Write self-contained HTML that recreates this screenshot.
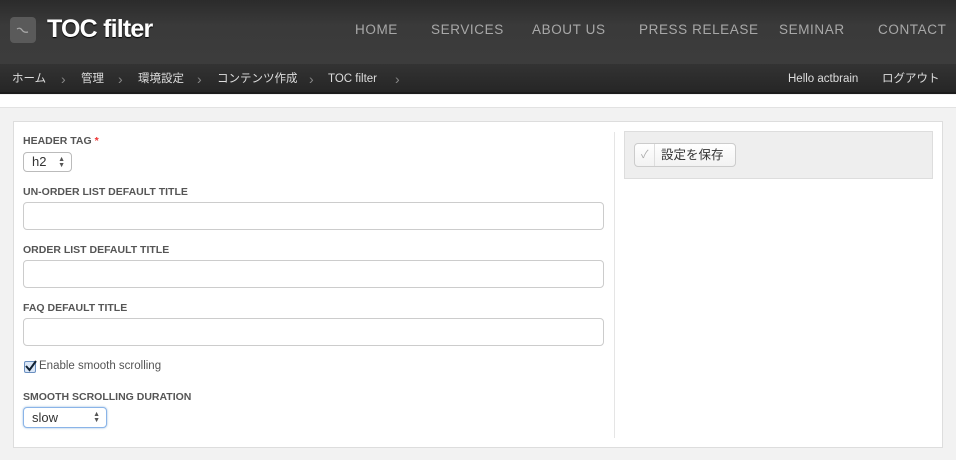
<!DOCTYPE html>
<html><head><meta charset="utf-8"><style>
*{box-sizing:border-box;margin:0;padding:0}
body{width:956px;height:460px;overflow:hidden;background:#f2f2f2;font-family:"Liberation Sans","Noto Sans CJK JP",sans-serif;position:relative}
.top{position:absolute;left:0;top:0;width:956px;height:64px;background:linear-gradient(#2b2b2b,#3a3a3a 40%,#3c3c3c)}
.logo{position:absolute;left:10px;top:17px;width:26px;height:26px;border-radius:4px;background:#5a5a5a}
.title{position:absolute;left:47px;top:15px;color:#fff;font-size:25px;font-weight:bold;letter-spacing:-0.8px;text-shadow:0 1px 1px #000}
.nav{position:absolute;top:22px;color:#a8a8a8;font-size:13.5px;letter-spacing:0.6px;line-height:16px}
.bc{position:absolute;left:0;top:64px;width:956px;height:30px;background:linear-gradient(#333,#262626);border-bottom:2px solid #1c1c1c}
.bc span{position:absolute;top:7px;height:16px;line-height:16px;color:#ddd;font-size:11.5px}
.bc .a{color:#888;font-size:14px}
.strip{position:absolute;left:0;top:95px;width:956px;height:13px;background:#fff;border-bottom:1px solid #e2e2e2}
.panel{position:absolute;left:13px;top:121px;width:930px;height:327px;background:#fff;border:1px solid #ddd}
.lbl{position:absolute;left:23px;font-size:10.5px;font-weight:bold;color:#555}
.inp{position:absolute;left:23px;width:581px;height:28px;border:1px solid #ccc;border-radius:4px;background:#fff}
.sel{position:absolute;left:23px;border:1px solid #bbb;border-radius:4px;font-size:13px;color:#333;padding-left:8px;background:#fff}
.arr{position:absolute;right:6px;top:4px;font-size:7px;line-height:6px;color:#555}
.side{position:absolute;left:624px;top:131px;width:309px;height:48px;background:#eee;border:1px solid #ddd}
.btn{position:absolute;left:634px;top:143px;width:102px;height:24px;border:1px solid #ccc;border-radius:4px;background:linear-gradient(#fff,#f2f2f2);font-size:12.5px;color:#333}
.btn span{position:absolute;top:3px;line-height:16px;height:16px}
</style></head><body>
<div class="top">
<div class="logo"><svg width="26" height="26"><path d="M7 12 q3 -2 5 1 t6 2" stroke="#aaa" fill="none" stroke-width="1.2"/></svg></div>
<div class="title">TOC filter</div>
<div class="nav" style="left:355px">HOME</div>
<div class="nav" style="left:431px">SERVICES</div>
<div class="nav" style="left:532px">ABOUT US</div>
<div class="nav" style="left:639px">PRESS RELEASE</div>
<div class="nav" style="left:779px">SEMINAR</div>
<div class="nav" style="left:878px">CONTACT</div>
</div>
<div class="bc">
<span style="left:12px">ホーム</span><span class="a" style="left:61px">›</span>
<span style="left:81px">管理</span><span class="a" style="left:118px">›</span>
<span style="left:138px">環境設定</span><span class="a" style="left:197px">›</span>
<span style="left:217px">コンテンツ作成</span><span class="a" style="left:309px">›</span>
<span style="left:328px">TOC filter</span><span class="a" style="left:395px">›</span>
<span style="left:788px">Hello actbrain</span><span style="left:882px">ログアウト</span>
</div>
<div class="strip"></div>
<div class="panel"></div>
<div style="position:absolute;left:614px;top:132px;width:1px;height:306px;background:#e5e5e5"></div>
<div class="lbl" style="top:135px">HEADER TAG <span style="color:#e33">*</span></div>
<div class="sel" style="top:152px;width:49px;height:20px;line-height:18px">h2<div class="arr">▲<br>▼</div></div>
<div class="lbl" style="top:186px">UN-ORDER LIST DEFAULT TITLE</div>
<div class="inp" style="top:202px"></div>
<div class="lbl" style="top:244px">ORDER LIST DEFAULT TITLE</div>
<div class="inp" style="top:260px"></div>
<div class="lbl" style="top:302px">FAQ DEFAULT TITLE</div>
<div class="inp" style="top:318px"></div>
<div style="position:absolute;left:24px;top:361px;width:12px;height:12px;border:1px solid #6a8fc0;border-radius:2px;background:#dbe7f7"><svg width="12" height="12" style="position:absolute;left:0;top:-2px"><path d="M1 6 L4.5 10 L11 1" stroke="#123" stroke-width="2" fill="none"/></svg></div>
<div style="position:absolute;left:39px;top:360px;font-size:11.5px;color:#555">Enable smooth scrolling</div>
<div class="lbl" style="top:391px">SMOOTH SCROLLING DURATION</div>
<div class="sel" style="top:407px;width:84px;height:21px;line-height:19px;border-color:#8ab4e8;box-shadow:0 0 2px #9bd">slow<div class="arr">▲<br>▼</div></div>
<div class="side"></div>
<div class="btn"><span style="left:6px;color:#aaa;font-size:11px">✓</span><i style="position:absolute;left:19px;top:0;width:1px;height:22px;background:#ddd"></i><span style="left:26px">設定を保存</span></div>
</body></html>
